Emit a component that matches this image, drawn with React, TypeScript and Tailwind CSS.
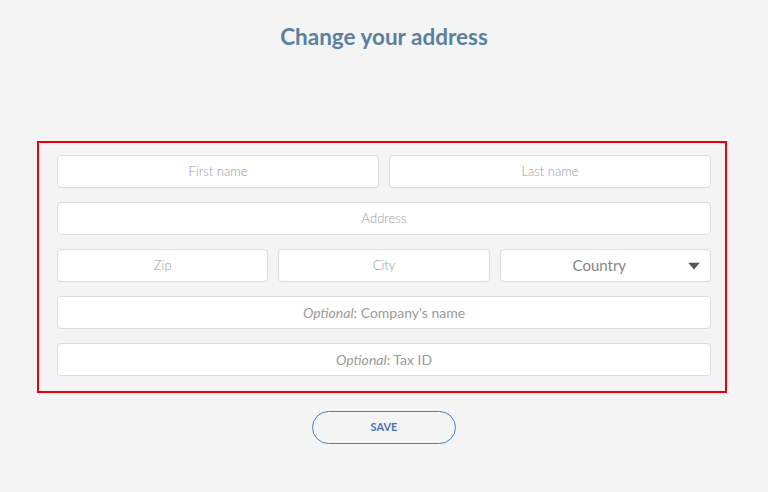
const lato = "font-['Lato','Liberation_Sans',sans-serif]"

function Field({ children, className = "" }: { children: React.ReactNode; className?: string }) {
  return (
    <div
      className={`flex h-[33px] items-center justify-center rounded-[4px] border border-[#dcdcdc] bg-white text-[13px] font-light text-[#9a9a9a] ${className}`}
    >
      {children}
    </div>
  )
}

export default function App() {
  return (
    <div className={`h-[492px] w-[768px] bg-[#f4f4f4] ${lato}`}>
      <h1 className="pt-[23px] text-center text-[22.5px] font-bold leading-[28px] text-[#5a80a2]">
        Change your address
      </h1>

      <form className="ml-[37px] mt-[90px] w-[690px] border-2 border-[#e8000b] pb-[15px] pl-[18px] pr-[14px] pt-[12px]">
        <div className="flex flex-col gap-[14px]">
          <div className="grid grid-cols-2 gap-[10px]">
            <Field>First name</Field>
            <Field>Last name</Field>
          </div>
          <Field>Address</Field>
          <div className="grid grid-cols-3 gap-[10px]">
            <Field>Zip</Field>
            <Field>City</Field>
            <div className="relative flex h-[33px] items-center justify-center rounded-[4px] border border-[#dcdcdc] bg-white pr-[12px] text-[15px] text-[#858585]">
              Country
              <svg
                className="absolute right-[10px] top-1/2 -translate-y-1/2"
                width="12"
                height="7"
                viewBox="0 0 12 7"
              >
                <path d="M0 0 L12 0 L6 7 Z" fill="#555" />
              </svg>
            </div>
          </div>
          <Field className="text-[14px] font-normal text-[#8e8e8e]">
            <span className="italic">Optional</span>: Company's name
          </Field>
          <Field className="text-[14px] font-normal text-[#8e8e8e]">
            <span className="italic">Optional</span>: Tax ID
          </Field>
        </div>
      </form>

      <div className="mt-[18px] flex justify-center">
        <button className="h-[33px] w-[144px] rounded-full border-[1.5px] border-[#4a7cc2] text-[11px] font-bold text-[#4a72b5]">
          SAVE
        </button>
      </div>
    </div>
  )
}
